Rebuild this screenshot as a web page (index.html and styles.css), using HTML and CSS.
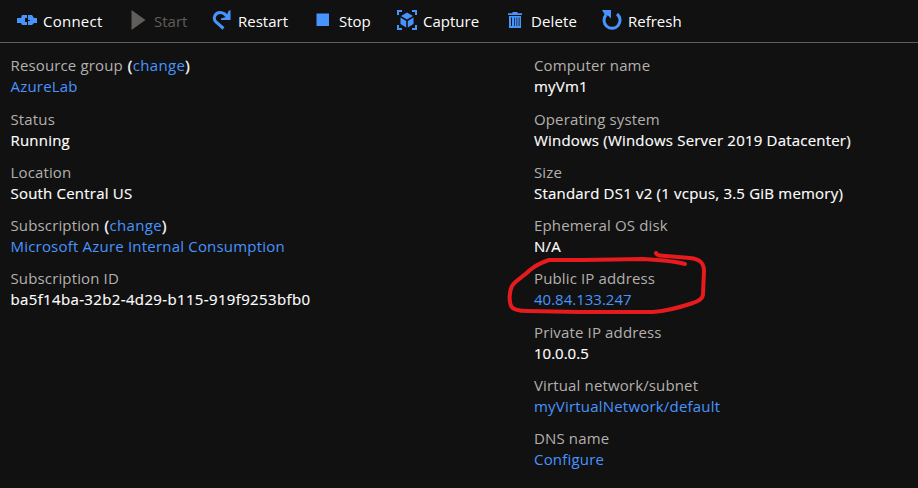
FILE: index.html
```
<!DOCTYPE html>
<html lang="en">
<head>
<meta charset="utf-8">
<title>myVm1</title>
<link rel="stylesheet" href="styles.css">
</head>
<body>
<nav class="toolbar">
  <div class="command connect"><svg class="icon" viewBox="0 0 20 20"><path d="M0 8h4l1-3h5v3H8v4h2v3H5l-1-2H0z"/><path d="M20 8h-3l-2-3h-4v5h2v1h-2v4h4l2-2h3z"/></svg><span>Connect</span></div>
  <div class="command start"><svg class="icon" viewBox="0 0 20 20"><path d="M3.5 0l14 10-14 10z"/></svg><span>Start</span></div>
  <div class="command restart"><svg class="icon" viewBox="0 0 20 20"><path class="line" d="M11.500 18.500L4 12C.5 8.500 3 2.500 8 2.500c3.500 0 6 2 8 5.500"/><path d="M18.500 0v10H9V8.500L14 7l2.500-6z"/></svg><span>Restart</span></div>
  <div class="command stop"><svg class="icon" viewBox="0 0 20 20"><path d="M3.500 3.500h12.500v12.500H3.500z"/></svg><span>Stop</span></div>
  <div class="command capture"><svg class="icon" viewBox="0 0 20 20"><path d="M0 0h5v2H2v3H0zM15 0h5v5h-2V2h-3zM0 15h2v3h3v2H0zM18 15h2v5h-5v-2h3zM10 2.500l6 3.500-6 3.500L4 6zM3.500 7.500L9.200 11v6.500L3.500 14zM16.500 7.500v6.500l-5.700 3.500V11z"/></svg><span>Capture</span></div>
  <div class="command delete"><svg class="icon" viewBox="0 0 20 20"><path d="M3 3.300h4.500V2h5v1.300H17V5H3z"/><path fill-rule="evenodd" d="M4 6h12v12H4zM6 7.500v8.500h1V7.500zM9 7.500v8.500h.7V7.500zM11.500 7.500v8.500h.7V7.500zM13.700 7.500v8.500h.8V7.500z"/></svg><span>Delete</span></div>
  <div class="command refresh"><svg class="icon" viewBox="0 0 20 20"><path class="line" d="M15 4A8 8 0 1 1 4 5"/><path d="M0 0h9v8.500L6.500 6 3 5z"/></svg><span>Refresh</span></div>
</nav>
<main class="essentials">
  <dl class="column">
    <div class="field"><dt>Resource group <b>(<a>change</a>)</b></dt><dd><a>AzureLab</a></dd></div>
    <div class="field"><dt>Status</dt><dd>Running</dd></div>
    <div class="field"><dt>Location</dt><dd>South Central US</dd></div>
    <div class="field"><dt>Subscription <b>(<a>change</a>)</b></dt><dd><a>Microsoft Azure Internal Consumption</a></dd></div>
    <div class="field"><dt>Subscription ID</dt><dd class="identifier">ba5f14ba-32b2-4d29-b115-919f9253bfb0</dd></div>
  </dl>
  <dl class="column">
    <div class="field"><dt>Computer name</dt><dd>myVm1</dd></div>
    <div class="field"><dt>Operating system</dt><dd>Windows (Windows Server 2019 Datacenter)</dd></div>
    <div class="field"><dt>Size</dt><dd>Standard DS1 v2 (1 vcpus, 3.5 GiB memory)</dd></div>
    <div class="field"><dt>Ephemeral OS disk</dt><dd>N/A</dd></div>
    <div class="field"><dt>Public IP address</dt><dd class="address"><a>40.84.133.247</a></dd></div>
    <div class="field"><dt>Private IP address</dt><dd class="address">10.0.0.5</dd></div>
    <div class="field"><dt>Virtual network/subnet</dt><dd><a>myVirtualNetwork/default</a></dd></div>
    <div class="field"><dt>DNS name</dt><dd><a>Configure</a></dd></div>
  </dl>
</main>
<svg class="annotation" viewBox="500 240 220 80"><path d="M656 253c1 3 5 3 10 3l24 2c10 1 14 5 14 13l-1 23c0 5-5 7-10 9-12 4-26 8-40 9H580l-52-1c-9 0-15-1-17-5-2-5-2-14 1-20 4-6 11-9 18-16 6-5 13-8 19-10h34l60-1c18 1 32 2 42 5"/></svg>
</body>
</html>
```
FILE: styles.css
```
* { box-sizing: border-box; }
body {
  margin: 0;
  width: 918px;
  height: 488px;
  overflow: hidden;
  background: #111;
  color: #fff;
  font: 15px/21px "Open Sans", "Noto Sans", sans-serif;
}
.toolbar {
  display: flex;
  height: 43px;
  padding-left: 17px;
  border-bottom: 1px solid #605e5c;
}
.command {
  display: flex;
  align-items: center;
  gap: 6px;
  height: 42px;
  white-space: nowrap;
}
.icon {
  width: 20px;
  height: 20px;
  flex: none;
  margin-top: -2px;
  fill: #4894fe;
}
.icon .line { fill: none; stroke: #4894fe; stroke-width: 3; }
.connect { width: 111px; letter-spacing: .25px; }
.start { width: 84px; color: #605e5c; }
.start .icon { fill: #605e5c; }
.restart { width: 101px; }
.stop { width: 84px; }
.capture { width: 108px; }
.delete { width: 97px; letter-spacing: .15px; }
.essentials {
  display: grid;
  grid-template-columns: 523.500px 1fr;
  padding: 12.300px 0 0 10.500px;
}
.column {
  display: flex;
  flex-direction: column;
  gap: 11.280px;
  margin: 0;
}
.field { white-space: nowrap; }
dt { color: #b3b0ad; letter-spacing: .14px; }
dd {
  margin: 0;
  letter-spacing: .2px;
  -webkit-text-stroke: .15px currentColor;
}
.identifier { letter-spacing: .36px; }
.address { letter-spacing: 0; }
b {
  margin-left: 1px;
  color: #fff;
  font-weight: 400;
  letter-spacing: .35px;
  -webkit-text-stroke: .3px currentColor;
}
a { color: #4894fe; -webkit-text-stroke: 0; }
.annotation {
  position: absolute;
  left: 500px;
  top: 240px;
  width: 220px;
  height: 80px;
  fill: none;
  stroke: #e71b1d;
  stroke-width: 4;
  stroke-linecap: round;
  stroke-linejoin: round;
}
```
